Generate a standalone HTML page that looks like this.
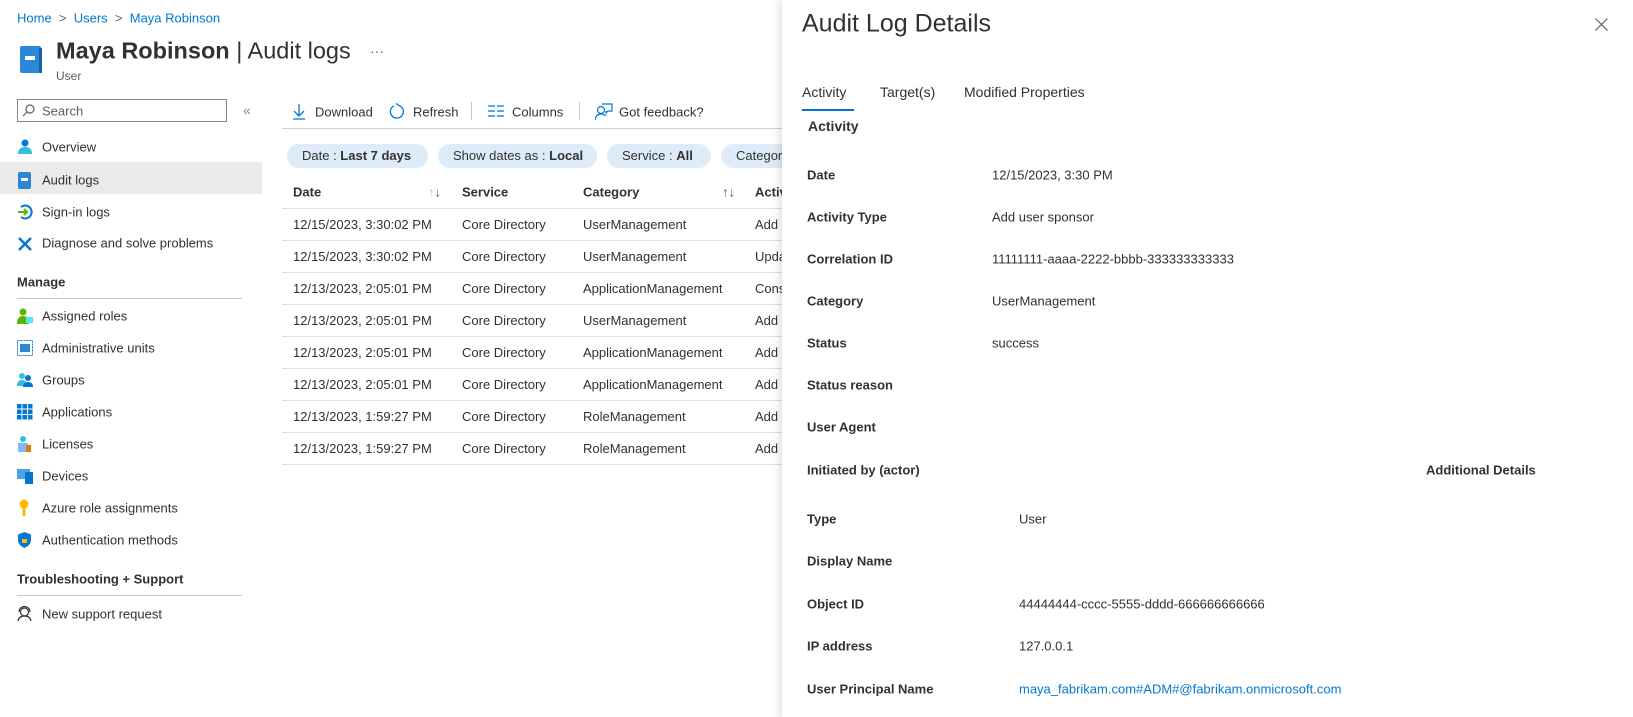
<!DOCTYPE html>
<html><head><meta charset="utf-8">
<style>
*{margin:0;padding:0;box-sizing:border-box}
body{width:1633px;height:717px;overflow:hidden;background:#fff;font-family:"Liberation Sans",sans-serif;color:#323130;position:relative;font-size:13px}
.a{position:absolute;white-space:nowrap}
.t{transform:translateY(-50%)}
.hl{background:#edebe9}
.ln{position:absolute;height:1px;background:#e1dfdd}
.pill{position:absolute;top:144px;height:24px;border-radius:12px;background:#deecf9;font-size:13px;line-height:24px;padding:0 15px;white-space:nowrap}
.row{position:absolute;left:282px;width:500px;height:32px;border-bottom:1px solid #e1dfdd;font-size:13px}
.row span{position:absolute;top:8px;white-space:nowrap}
.lb{font-weight:bold;font-size:13px;color:#323130}
.v{font-size:13px;color:#323130}
</style></head><body>

<div class="a t" style="left:17px;top:18px;font-size:13px;color:#0078d4">Home <span style="color:#605e5c">&nbsp;&gt;&nbsp;</span> Users <span style="color:#605e5c">&nbsp;&gt;&nbsp;</span> Maya Robinson</div>
<svg class="a" style="left:19px;top:45px" width="24" height="29" viewBox="0 0 24 29"><rect x="1" y="1" width="21" height="27" rx="2" fill="#2b88d8"/><rect x="20" y="3" width="3" height="25" fill="#1a5fa8"/><rect x="6" y="11" width="10" height="4" fill="#fff"/></svg>
<div class="a t" style="left:56px;top:51px;font-size:23.5px;color:#323130"><b>Maya Robinson</b> | Audit logs</div>
<div class="a t" style="left:370px;top:51px;font-size:14px;color:#605e5c">···</div>
<div class="a t" style="left:56px;top:76px;font-size:12px;color:#605e5c">User</div>

<div class="a" style="left:17px;top:99px;width:210px;height:23px;border:1px solid #8a8886"></div>
<svg class="a" style="left:22px;top:104px" width="13" height="13" viewBox="0 0 13 13"><circle cx="8" cy="5" r="4" fill="none" stroke="#605e5c" stroke-width="1.2"/><line x1="5" y1="8" x2="1" y2="12" stroke="#605e5c" stroke-width="1.2"/></svg>
<div class="a t" style="left:42px;top:111px;font-size:13px;color:#605e5c">Search</div>
<div class="a t" style="left:243px;top:110px;font-size:14px;color:#8a8886">«</div>

<div class="a hl" style="left:0;top:162px;width:262px;height:32px"></div>
<svg class="a" style="left:18px;top:139px" width="14" height="15"><circle cx="7" cy="4" r="3.5" fill="#0078d4"/><path d="M0 15 Q0 8 7 8 Q14 8 14 15Z" fill="#32bedd"/></svg>
<div class="a t" style="left:42px;top:147px">Overview</div>
<svg class="a" style="left:18px;top:172px" width="14" height="17"><rect x="0" y="0" width="13" height="17" rx="2" fill="#2b88d8"/><rect x="3" y="6" width="7" height="3" fill="#fff"/></svg>
<div class="a t" style="left:42px;top:180px">Audit logs</div>
<svg class="a" style="left:17px;top:204px" width="16" height="16"><path d="M4 3 A6.5 6.5 0 1 1 4 13" fill="none" stroke="#0078d4" stroke-width="2"/><path d="M1 8 H10 M7 5 L10 8 L7 11" fill="none" stroke="#5db300" stroke-width="2"/></svg>
<div class="a t" style="left:42px;top:212px">Sign-in logs</div>
<svg class="a" style="left:17px;top:236px" width="16" height="16"><path d="M2 14 L14 2 M2 2 L14 14" stroke="#0078d4" stroke-width="2.5"/></svg>
<div class="a t" style="left:42px;top:243px">Diagnose and solve problems</div>

<div class="a t" style="left:17px;top:282px;font-weight:bold;font-size:13px">Manage</div>
<div class="ln" style="left:17px;top:298px;width:225px;background:#c8c6c4"></div>
<svg class="a" style="left:17px;top:308px" width="16" height="16"><circle cx="6" cy="4" r="3.5" fill="#5db300"/><path d="M0 16 Q0 8 6 8 Q12 8 12 16Z" fill="#5db300"/><rect x="9" y="9" width="7" height="6" fill="#50e6ff"/></svg>
<div class="a t" style="left:42px;top:316px">Assigned roles</div>
<svg class="a" style="left:17px;top:340px" width="16" height="16"><rect x="0.5" y="0.5" width="15" height="15" fill="none" stroke="#0078d4" stroke-dasharray="2 1"/><rect x="3" y="4" width="10" height="8" fill="#2b88d8"/></svg>
<div class="a t" style="left:42px;top:348px">Administrative units</div>
<svg class="a" style="left:17px;top:372px" width="16" height="16"><circle cx="5" cy="4" r="3" fill="#32bedd"/><path d="M0 14 Q0 8 5 8 Q10 8 10 14Z" fill="#32bedd"/><circle cx="11" cy="6" r="3" fill="#0078d4"/><path d="M6 15 Q6 10 11 10 Q16 10 16 15Z" fill="#0078d4"/></svg>
<div class="a t" style="left:42px;top:380px">Groups</div>
<svg class="a" style="left:17px;top:404px" width="16" height="16"><g fill="#0078d4"><rect x="0" y="0" width="4.5" height="4.5"/><rect x="5.5" y="0" width="4.5" height="4.5"/><rect x="11" y="0" width="4.5" height="4.5"/><rect x="0" y="5.5" width="4.5" height="4.5"/><rect x="5.5" y="5.5" width="4.5" height="4.5"/><rect x="11" y="5.5" width="4.5" height="4.5"/><rect x="0" y="11" width="4.5" height="4.5"/><rect x="5.5" y="11" width="4.5" height="4.5"/><rect x="11" y="11" width="4.5" height="4.5"/></g></svg>
<div class="a t" style="left:42px;top:412px">Applications</div>
<svg class="a" style="left:18px;top:436px" width="14" height="16"><circle cx="5" cy="3" r="3" fill="#32bedd"/><rect x="0" y="7" width="10" height="9" fill="#83b9f9"/><rect x="8" y="9" width="5" height="7" fill="#e07b00"/></svg>
<div class="a t" style="left:42px;top:444px">Licenses</div>
<svg class="a" style="left:17px;top:469px" width="16" height="15"><rect x="0" y="0" width="13" height="10" fill="#50a0e6"/><rect x="8" y="3" width="8" height="12" fill="#0078d4"/></svg>
<div class="a t" style="left:42px;top:476px">Devices</div>
<svg class="a" style="left:19px;top:499px" width="10" height="18"><circle cx="5" cy="5" r="4.5" fill="#ffb900"/><rect x="3.5" y="8" width="3" height="9" fill="#ffb900"/></svg>
<div class="a t" style="left:42px;top:508px">Azure role assignments</div>
<svg class="a" style="left:18px;top:532px" width="13" height="16"><path d="M6.5 0 L13 2.5 V8 Q13 13 6.5 16 Q0 13 0 8 V2.5Z" fill="#0078d4"/><rect x="4" y="7" width="5" height="4" fill="#ffb900"/></svg>
<div class="a t" style="left:42px;top:540px">Authentication methods</div>

<div class="a t" style="left:17px;top:579px;font-weight:bold;font-size:13px">Troubleshooting + Support</div>
<div class="ln" style="left:17px;top:595px;width:225px;background:#c8c6c4"></div>
<svg class="a" style="left:17px;top:606px" width="15" height="15"><circle cx="7.5" cy="6" r="4" fill="none" stroke="#323130" stroke-width="1.2"/><path d="M1 15 Q2 10 7.5 10 Q13 10 14 15 M2 6 A5.5 5.5 0 0 1 13 6" fill="none" stroke="#323130" stroke-width="1.2"/></svg>
<div class="a t" style="left:42px;top:614px">New support request</div>

<!-- toolbar -->
<svg class="a" style="left:292px;top:103px" width="14" height="17"><path d="M7 1 V13 M2 8 L7 13 L12 8 M1 16 H13" fill="none" stroke="#0078d4" stroke-width="1.3"/></svg>
<div class="a t" style="left:315px;top:112px">Download</div>
<svg class="a" style="left:389px;top:103px" width="16" height="17"><path d="M10 2.5 A6.5 6.5 0 1 1 5 2.8 M10 2.5 L7 0.5" fill="none" stroke="#0078d4" stroke-width="1.3"/></svg>
<div class="a t" style="left:413px;top:112px">Refresh</div>
<div class="a" style="left:471px;top:102px;width:1px;height:18px;background:#c8c6c4"></div>
<svg class="a" style="left:488px;top:105px" width="16" height="12"><path d="M0 1 H7 M9 1 H16 M0 6 H7 M9 6 H16 M0 11 H7 M9 11 H16" stroke="#0078d4" stroke-width="1.3"/></svg>
<div class="a t" style="left:512px;top:112px">Columns</div>
<div class="a" style="left:579px;top:102px;width:1px;height:18px;background:#c8c6c4"></div>
<svg class="a" style="left:595px;top:103px" width="18" height="17"><circle cx="6" cy="7" r="3.5" fill="none" stroke="#0078d4" stroke-width="1.2"/><path d="M0 17 Q1 11 6 11 Q9 11 11 13 M7 1 H17 V8 H13 L11 10 V8" fill="none" stroke="#0078d4" stroke-width="1.2"/></svg>
<div class="a t" style="left:619px;top:112px">Got feedback?</div>
<div class="ln" style="left:282px;top:128px;width:500px;background:#d2d0ce"></div>

<div class="pill" style="left:287px;width:141px">Date : <b>Last 7 days</b></div>
<div class="pill" style="left:438px;width:159px">Show dates as : <b>Local</b></div>
<div class="pill" style="left:607px;width:104px">Service : <b>All</b></div>
<div class="pill" style="left:721px;width:100px">Category</div>

<div class="a t" style="left:293px;top:192px;font-weight:bold">Date</div>
<div class="a t" style="left:428px;top:192px;font-size:13px;color:#605e5c"><span style="color:#c8c6c4">↑</span>↓</div>
<div class="a t" style="left:462px;top:192px;font-weight:bold">Service</div>
<div class="a t" style="left:583px;top:192px;font-weight:bold">Category</div>
<div class="a t" style="left:722px;top:192px;font-size:13px;color:#605e5c">↑↓</div>
<div class="a t" style="left:755px;top:192px;font-weight:bold">Activity</div>
<div class="ln" style="left:282px;top:208px;width:500px"></div>

<div class="row" style="top:209px"><span style="left:11px">12/15/2023, 3:30:02 PM</span><span style="left:180px">Core Directory</span><span style="left:301px">UserManagement</span><span style="left:473px">Add user sponsor</span></div>
<div class="row" style="top:241px"><span style="left:11px">12/15/2023, 3:30:02 PM</span><span style="left:180px">Core Directory</span><span style="left:301px">UserManagement</span><span style="left:473px">Update user</span></div>
<div class="row" style="top:273px"><span style="left:11px">12/13/2023, 2:05:01 PM</span><span style="left:180px">Core Directory</span><span style="left:301px">ApplicationManagement</span><span style="left:473px">Consent</span></div>
<div class="row" style="top:305px"><span style="left:11px">12/13/2023, 2:05:01 PM</span><span style="left:180px">Core Directory</span><span style="left:301px">UserManagement</span><span style="left:473px">Add</span></div>
<div class="row" style="top:337px"><span style="left:11px">12/13/2023, 2:05:01 PM</span><span style="left:180px">Core Directory</span><span style="left:301px">ApplicationManagement</span><span style="left:473px">Add</span></div>
<div class="row" style="top:369px"><span style="left:11px">12/13/2023, 2:05:01 PM</span><span style="left:180px">Core Directory</span><span style="left:301px">ApplicationManagement</span><span style="left:473px">Add</span></div>
<div class="row" style="top:401px"><span style="left:11px">12/13/2023, 1:59:27 PM</span><span style="left:180px">Core Directory</span><span style="left:301px">RoleManagement</span><span style="left:473px">Add</span></div>
<div class="row" style="top:433px"><span style="left:11px">12/13/2023, 1:59:27 PM</span><span style="left:180px">Core Directory</span><span style="left:301px">RoleManagement</span><span style="left:473px">Add</span></div>

<!-- panel -->
<div class="a" style="left:782px;top:0;width:851px;height:717px;background:#fff;box-shadow:-3px 0 8px rgba(0,0,0,0.12)">
<div class="a t" style="left:20px;top:24px;font-size:25px;color:#323130">Audit Log Details</div>
<svg class="a" style="left:813px;top:18px" width="13" height="13"><path d="M0.5 0.5 L12.5 12.5 M12.5 0.5 L0.5 12.5" stroke="#605e5c" stroke-width="1.2"/></svg>
<div class="a t" style="left:20px;top:92px;font-size:14px">Activity</div>
<div class="a t" style="left:98px;top:92px;font-size:14px">Target(s)</div>
<div class="a t" style="left:182px;top:92px;font-size:14px">Modified Properties</div>
<div class="a" style="left:20px;top:109px;width:52px;height:2px;background:#0078d4"></div>
<div class="a t lb" style="left:26px;top:126px;font-size:14px">Activity</div>

<div class="a t lb" style="left:25px;top:175px">Date</div><div class="a t v" style="left:210px;top:175px">12/15/2023, 3:30 PM</div>
<div class="a t lb" style="left:25px;top:217px">Activity Type</div><div class="a t v" style="left:210px;top:217px">Add user sponsor</div>
<div class="a t lb" style="left:25px;top:259px">Correlation ID</div><div class="a t v" style="left:210px;top:259px">11111111-aaaa-2222-bbbb-333333333333</div>
<div class="a t lb" style="left:25px;top:301px">Category</div><div class="a t v" style="left:210px;top:301px">UserManagement</div>
<div class="a t lb" style="left:25px;top:343px">Status</div><div class="a t v" style="left:210px;top:343px">success</div>
<div class="a t lb" style="left:25px;top:385px">Status reason</div>
<div class="a t lb" style="left:25px;top:427px">User Agent</div>

<div class="a t lb" style="left:25px;top:470px">Initiated by (actor)</div>
<div class="a t lb" style="left:644px;top:470px">Additional Details</div>
<div class="a t lb" style="left:25px;top:519px">Type</div><div class="a t v" style="left:237px;top:519px">User</div>
<div class="a t lb" style="left:25px;top:561px">Display Name</div>
<div class="a t lb" style="left:25px;top:604px">Object ID</div><div class="a t v" style="left:237px;top:604px">44444444-cccc-5555-dddd-666666666666</div>
<div class="a t lb" style="left:25px;top:646px">IP address</div><div class="a t v" style="left:237px;top:646px">127.0.0.1</div>
<div class="a t lb" style="left:25px;top:689px">User Principal Name</div><div class="a t v" style="left:237px;top:689px;color:#0078d4">maya_fabrikam.com#ADM#@fabrikam.onmicrosoft.com</div>
</div>
</body></html>
